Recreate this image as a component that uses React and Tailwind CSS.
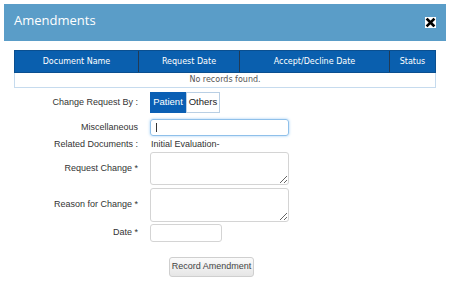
import React from "react";

const labelCls = "w-[138px] shrink-0 text-right text-[9px] text-[#333]";

export default function App() {
  return (
    <div className="w-[450px] h-[282px] bg-white overflow-hidden font-['Liberation_Sans',Arial,sans-serif] pt-[4px]">
      {/* modal header */}
      <div className="mx-[4px] h-[37px] bg-[#5a9dc8] flex items-center justify-between pl-[10px] pr-[10px]">
        <span className="text-white text-[13px] font-['Open_Sans',sans-serif] -mt-[3px]">Amendments</span>
        <svg width="11" height="11" viewBox="0 0 11 11">
          <rect x="0" y="0" width="11" height="11" fill="#fff" />
          <path d="M2.5 2.5 L8.5 8.5 M8.5 2.5 L2.5 8.5" stroke="#000" strokeWidth="2.6" strokeLinecap="square" />
        </svg>
      </div>

      {/* records table */}
      <div className="mx-[14px] mt-[9px] w-[422px] font-['DejaVu_Sans',Verdana,sans-serif]">
        <div className="flex h-[23px] bg-[#0a5fae] text-white text-[8px] border border-[#0a4f90]">
          <div className="w-[124px] flex items-center justify-center border-r border-[#213a55]">Document Name</div>
          <div className="w-[101px] flex items-center justify-center border-r border-[#213a55]">Request Date</div>
          <div className="w-[150px] flex items-center justify-center border-r border-[#213a55]">Accept/Decline Date</div>
          <div className="flex-1 flex items-center justify-center">Status</div>
        </div>
        <div className="h-[15px] border border-t-0 border-[#c6dbee] flex items-center justify-center text-[8px] text-[#555]">
          No records found.
        </div>
      </div>

      {/* form */}
      <div className="mt-[4px] flex items-center h-[21px]">
        <div className={labelCls}>Change Request By :</div>
        <div className="ml-[12px] flex h-full text-[9.5px]">
          <div className="w-[36px] bg-[#0a5fb4] text-white flex items-center justify-center">Patient</div>
          <div className="w-[34px] border border-[#b9cfe4] text-[#222] flex items-center justify-center">Others</div>
        </div>
      </div>

      <div className="mt-[6px] flex items-center h-[17px]">
        <div className={labelCls}>Miscellaneous</div>
        <div className="ml-[12px] w-[139px] h-full rounded-[3px] border border-[#8fc0ea] shadow-[0_0_3px_#9fcdf3] flex items-center pl-[5px]">
          <div className="w-px h-[9px] bg-[#333]" />
        </div>
      </div>

      <div className="mt-[2px] flex items-center h-[13px]">
        <div className={labelCls}>Related Documents :</div>
        <div className="ml-[13px] text-[9px] text-[#333]">Initial Evaluation-</div>
      </div>

      <div className="mt-[1px] flex items-center h-[33px]">
        <div className={labelCls}>Request Change *</div>
        <textarea className="ml-[12px] w-[139px] h-full rounded-[3px] border border-[#d4d4d4] resize-y block" />
      </div>

      <div className="mt-[3px] flex items-center h-[34px]">
        <div className={labelCls}>Reason for Change *</div>
        <textarea className="ml-[12px] w-[139px] h-full rounded-[3px] border border-[#d4d4d4] resize-y block" />
      </div>

      <div className="mt-[2px] flex items-center h-[18px]">
        <div className={labelCls}>Date *</div>
        <input className="ml-[12px] w-[72px] h-full rounded-[3px] border border-[#d4d4d4]" />
      </div>

      <div className="mt-[15px] flex">
        <button className="ml-[169px] w-[85px] h-[20px] px-0 whitespace-nowrap rounded-[3px] border border-[#cfcfcf] bg-gradient-to-b from-[#fbfbfb] to-[#e6e6e6] text-[9px] text-[#444]">
          Record Amendment
        </button>
      </div>
    </div>
  );
}
